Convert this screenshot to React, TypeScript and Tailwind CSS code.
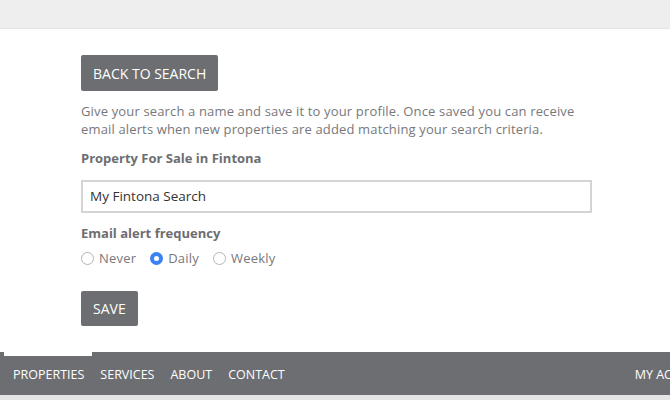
import React from "react";

const font = { fontFamily: '"Open Sans", "DejaVu Sans", sans-serif' };

function Radio({ label, checked }: { label: string; checked?: boolean }) {
  return (
    <label className="flex items-center gap-[5px]">
      {checked ? (
        <span className="flex h-[13px] w-[13px] items-center justify-center rounded-full bg-[#3b82f6]">
          <span className="h-[5px] w-[5px] rounded-full bg-white" />
        </span>
      ) : (
        <span className="h-[13px] w-[13px] rounded-full border border-[#b5b5b5] bg-white" />
      )}
      <span className="text-[13px] tracking-[0.2px] text-[#77787b]">{label}</span>
    </label>
  );
}

export default function App() {
  return (
    <div className="flex h-[400px] w-[670px] flex-col overflow-hidden bg-white" style={font}>
      <div className="h-[29px] shrink-0 border-b border-[#e6e6e6] bg-[#eeeeee]" />
      <div className="flex flex-1 flex-col pl-[81px] pt-[26px]">
        <div>
          <button className="h-[36px] rounded-[2px] bg-[#6d6e71] px-[12px] text-[14px] uppercase text-white">
            Back to Search
          </button>
        </div>
        <p className="mt-[11px] w-[500px] text-[13px] leading-[18px] tracking-[0.15px] text-[#77787b]">
          Give your search a name and save it to your profile. Once saved you can receive email alerts when new
          properties are added matching your search criteria.
        </p>
        <div className="mt-[11px] text-[13px] font-bold text-[#6d6e71]">Property For Sale in Fintona</div>
        <div className="mt-[11px] flex h-[33px] w-[511px] items-center border-2 border-[#d4d4d4] px-[7px] text-[13.5px] text-[#333]">
          My Fintona Search
        </div>
        <div className="mt-[11px] text-[13px] font-bold text-[#6d6e71]">Email alert frequency</div>
        <div className="mt-[6px] flex items-center gap-[14px]">
          <Radio label="Never" />
          <Radio label="Daily" checked />
          <Radio label="Weekly" />
        </div>
        <div className="mt-[22px]">
          <button className="h-[35px] rounded-[2px] bg-[#6d6e71] px-[12px] text-[14px] uppercase text-white">
            Save
          </button>
        </div>
      </div>
      <div className="relative h-[43px] shrink-0 bg-[#6d6e71]">
        <div className="absolute left-[4px] top-0 h-[4px] w-[88px] bg-white" />
        <div className="flex h-full items-center pl-[13px] pt-[3px] text-[12.5px] uppercase text-white">
          <span>Properties</span>
          <span className="ml-[16px]">Services</span>
          <span className="ml-[16px]">About</span>
          <span className="ml-[16px]">Contact</span>
          <span className="ml-auto mr-[-45px] whitespace-nowrap">My Account</span>
        </div>
      </div>
      <div className="h-[5px] shrink-0 bg-[#e5e5e5]" />
    </div>
  );
}
